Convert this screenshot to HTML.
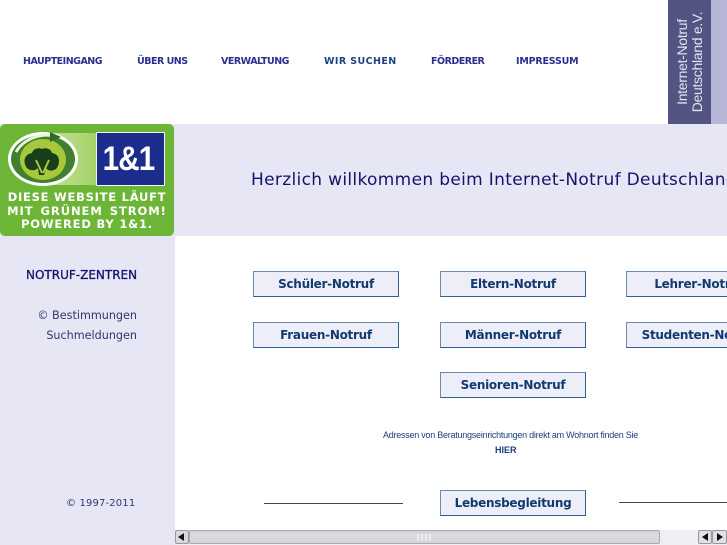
<!DOCTYPE html>
<html><head><meta charset="utf-8"><style>
html,body{margin:0;padding:0;width:727px;height:545px;overflow:hidden;background:#fff}
body{position:relative;font-family:"DejaVu Sans","Liberation Sans",sans-serif}
.a{position:absolute;white-space:nowrap}
.n{top:55px;font-size:9.5px;line-height:13px;font-weight:bold;color:#2b2f8f;letter-spacing:-.5px}
.b{position:absolute;width:144px;height:24px;border:1px solid #2f5f8f;border-left-color:#6a8ab0;border-top-color:#6a8ab0;background:#eeeef8;color:#123a70;font-size:12px;font-weight:bold;letter-spacing:-.28px;line-height:25px;text-align:center;white-space:nowrap;overflow:hidden}
.g{position:absolute;left:0;width:174px;text-align:center;font-family:"DejaVu Sans",sans-serif;font-weight:bold;font-size:11.5px;line-height:14px;color:#fff;white-space:nowrap}
</style></head><body>
<div class="a n" style="left:23px">HAUPTEINGANG</div>
<div class="a n" style="left:137px">ÜBER UNS</div>
<div class="a n" style="left:221px">VERWALTUNG</div>
<div class="a n" style="left:324px;color:#1d4480;letter-spacing:.4px">WIR SUCHEN</div>
<div class="a n" style="left:431px">FÖRDERER</div>
<div class="a n" style="left:516px;letter-spacing:-.2px">IMPRESSUM</div>

<div class="a" style="left:668px;top:0;width:43px;height:124px;background:#535384"></div>
<div class="a" style="left:711px;top:0;width:16px;height:124px;background:#b6b6d6"></div>
<div class="a" style="left:668px;top:0;width:43px;height:124px;overflow:hidden">
<div class="a" style="left:-40px;top:47px;width:124px;height:30px;transform:rotate(-90deg);font-family:'Liberation Sans',sans-serif;font-size:14px;line-height:15px;color:#e4e4f0;letter-spacing:-.3px;text-align:center">Internet-Notruf<br>Deutschland e.V.</div>
</div>

<div class="a" style="left:0;top:124px;width:727px;height:112px;background:#e6e6f4"></div>
<div class="a" style="left:0;top:236px;width:175px;height:309px;background:#e6e6f4"></div>

<div class="a" style="left:0;top:124px;width:174px;height:112px;background:#6cb536;border-radius:5px;overflow:hidden">
 <div class="a" style="left:45px;top:9px;width:51px;height:52px;background:linear-gradient(90deg,#c5e29a,#a4d268)"></div>
 <div class="a" style="left:8px;top:8px;width:70px;height:54px;border-radius:50%;background:#fff"></div>
 <div class="a" style="left:11px;top:11px;width:64px;height:48px;border-radius:50%;background:#3f7f2d"></div>
 <div class="a" style="left:20px;top:15px;width:46px;height:41px;border-radius:50%;background:#a8c83c"></div>
 <svg class="a" style="left:8px;top:8px" width="72" height="54" viewBox="0 0 72 54"><path d="M8 20C16 6 34 1 46 4" fill="none" stroke="#e8f3d8" stroke-width="3"/><path d="M42 0l11 5-11 5z" fill="#2f6b22"/><path d="M19 36c-5-7-2-14 5-15 1-4 6-6 10-4 4-2 9 0 10 4 7 1 9 8 5 15-4 4-9 3-11 0l-2 7h-5l-1-7c-3 3-8 3-11 0z" fill="#173f1a"/><path d="M34 41l-6-13M35 41l6-13" stroke="#a8c83c" stroke-width="2" fill="none"/></svg>
 <div class="a" style="left:96px;top:8px;width:69px;height:54px;background:#1c2c8c;border:1px solid #f2f6ee;box-sizing:border-box"></div>
 <div class="a" style="left:94px;top:16px;width:69px;text-align:center;font-family:'Liberation Sans',sans-serif;font-weight:bold;font-size:34px;line-height:38px;color:#fff;letter-spacing:-1px;transform:scaleX(.87)">1&amp;1</div>
 <div class="g" style="top:66px;letter-spacing:.75px">DIESE WEBSITE LÄUFT</div>
 <div class="g" style="top:80px;letter-spacing:.95px;word-spacing:2px">MIT GRÜNEM STROM!</div>
 <div class="g" style="top:93px;letter-spacing:.8px">POWERED BY 1&amp;1.</div>
</div>

<div class="a" style="left:251px;top:170px;font-size:17px;line-height:21px;color:#14146e;letter-spacing:.33px">Herzlich willkommen beim Internet-Notruf Deutschland</div>

<div class="a" style="left:26px;top:268px;font-size:12px;line-height:15px;color:#14146e;-webkit-text-stroke:.3px #14146e">NOTRUF-ZENTREN</div>
<div class="a" style="right:590px;top:306px;font-size:11.2px;line-height:20px;color:#34346f;text-align:right">© Bestimmungen<br>Suchmeldungen</div>
<div class="a" style="left:66px;top:497px;font-size:10px;line-height:13px;color:#34346f;letter-spacing:.15px">© 1997-2011</div>

<div class="b" style="left:253px;top:271px">Schüler-Notruf</div>
<div class="b" style="left:440px;top:271px">Eltern-Notruf</div>
<div class="b" style="left:626px;top:271px">Lehrer-Notruf</div>
<div class="b" style="left:253px;top:322px">Frauen-Notruf</div>
<div class="b" style="left:440px;top:322px">Männer-Notruf</div>
<div class="b" style="left:626px;top:322px">Studenten-Notruf</div>
<div class="b" style="left:440px;top:372px">Senioren-Notruf</div>
<div class="b" style="left:440px;top:490px">Lebensbegleitung</div>

<div class="a" style="left:383px;top:429px;font-family:'Liberation Sans',sans-serif;font-size:9px;line-height:13px;color:#1d3f78;letter-spacing:-.25px">Adressen von Beratungseinrichtungen direkt am Wohnort finden Sie</div>
<div class="a" style="left:495px;top:444px;font-family:'Liberation Sans',sans-serif;font-size:9px;line-height:13px;color:#1d3f78;font-weight:bold">HIER</div>

<div class="a" style="left:264px;top:503px;width:139px;height:1px;background:#444"></div>
<div class="a" style="left:619px;top:502px;width:108px;height:1px;background:#444"></div>

<div class="a" style="left:175px;top:530px;width:552px;height:15px;background:#efeff3"></div>
<div class="a" style="left:175px;top:530px;width:14px;height:14px;background:#d8d8e0;border:1px solid #999;box-sizing:border-box;border-radius:2px"></div>
<div class="a" style="left:178px;top:533px;width:0;height:0;border:4px solid transparent;border-left:0;border-right:6px solid #111"></div>
<div class="a" style="left:189px;top:530px;width:471px;height:14px;background:linear-gradient(#cfcfd6,#dcdce2 30%,#d4d4da);border:1px solid #aaa;box-sizing:border-box;border-radius:2px"></div>
<div class="a" style="left:417px;top:534px;width:16px;height:7px;background:repeating-linear-gradient(90deg,#eee 0 2px,transparent 2px 4px)"></div>
<div class="a" style="left:698px;top:530px;width:14px;height:14px;background:#e0e0e6;border:1px solid #999;box-sizing:border-box;border-radius:2px"></div>
<div class="a" style="left:702px;top:533px;width:0;height:0;border:4px solid transparent;border-left:0;border-right:6px solid #111"></div>
<div class="a" style="left:712px;top:530px;width:15px;height:14px;background:#e0e0e6;border:1px solid #999;box-sizing:border-box;border-radius:2px"></div>
<div class="a" style="left:717px;top:533px;width:0;height:0;border:4px solid transparent;border-right:0;border-left:6px solid #111"></div>
</body></html>
